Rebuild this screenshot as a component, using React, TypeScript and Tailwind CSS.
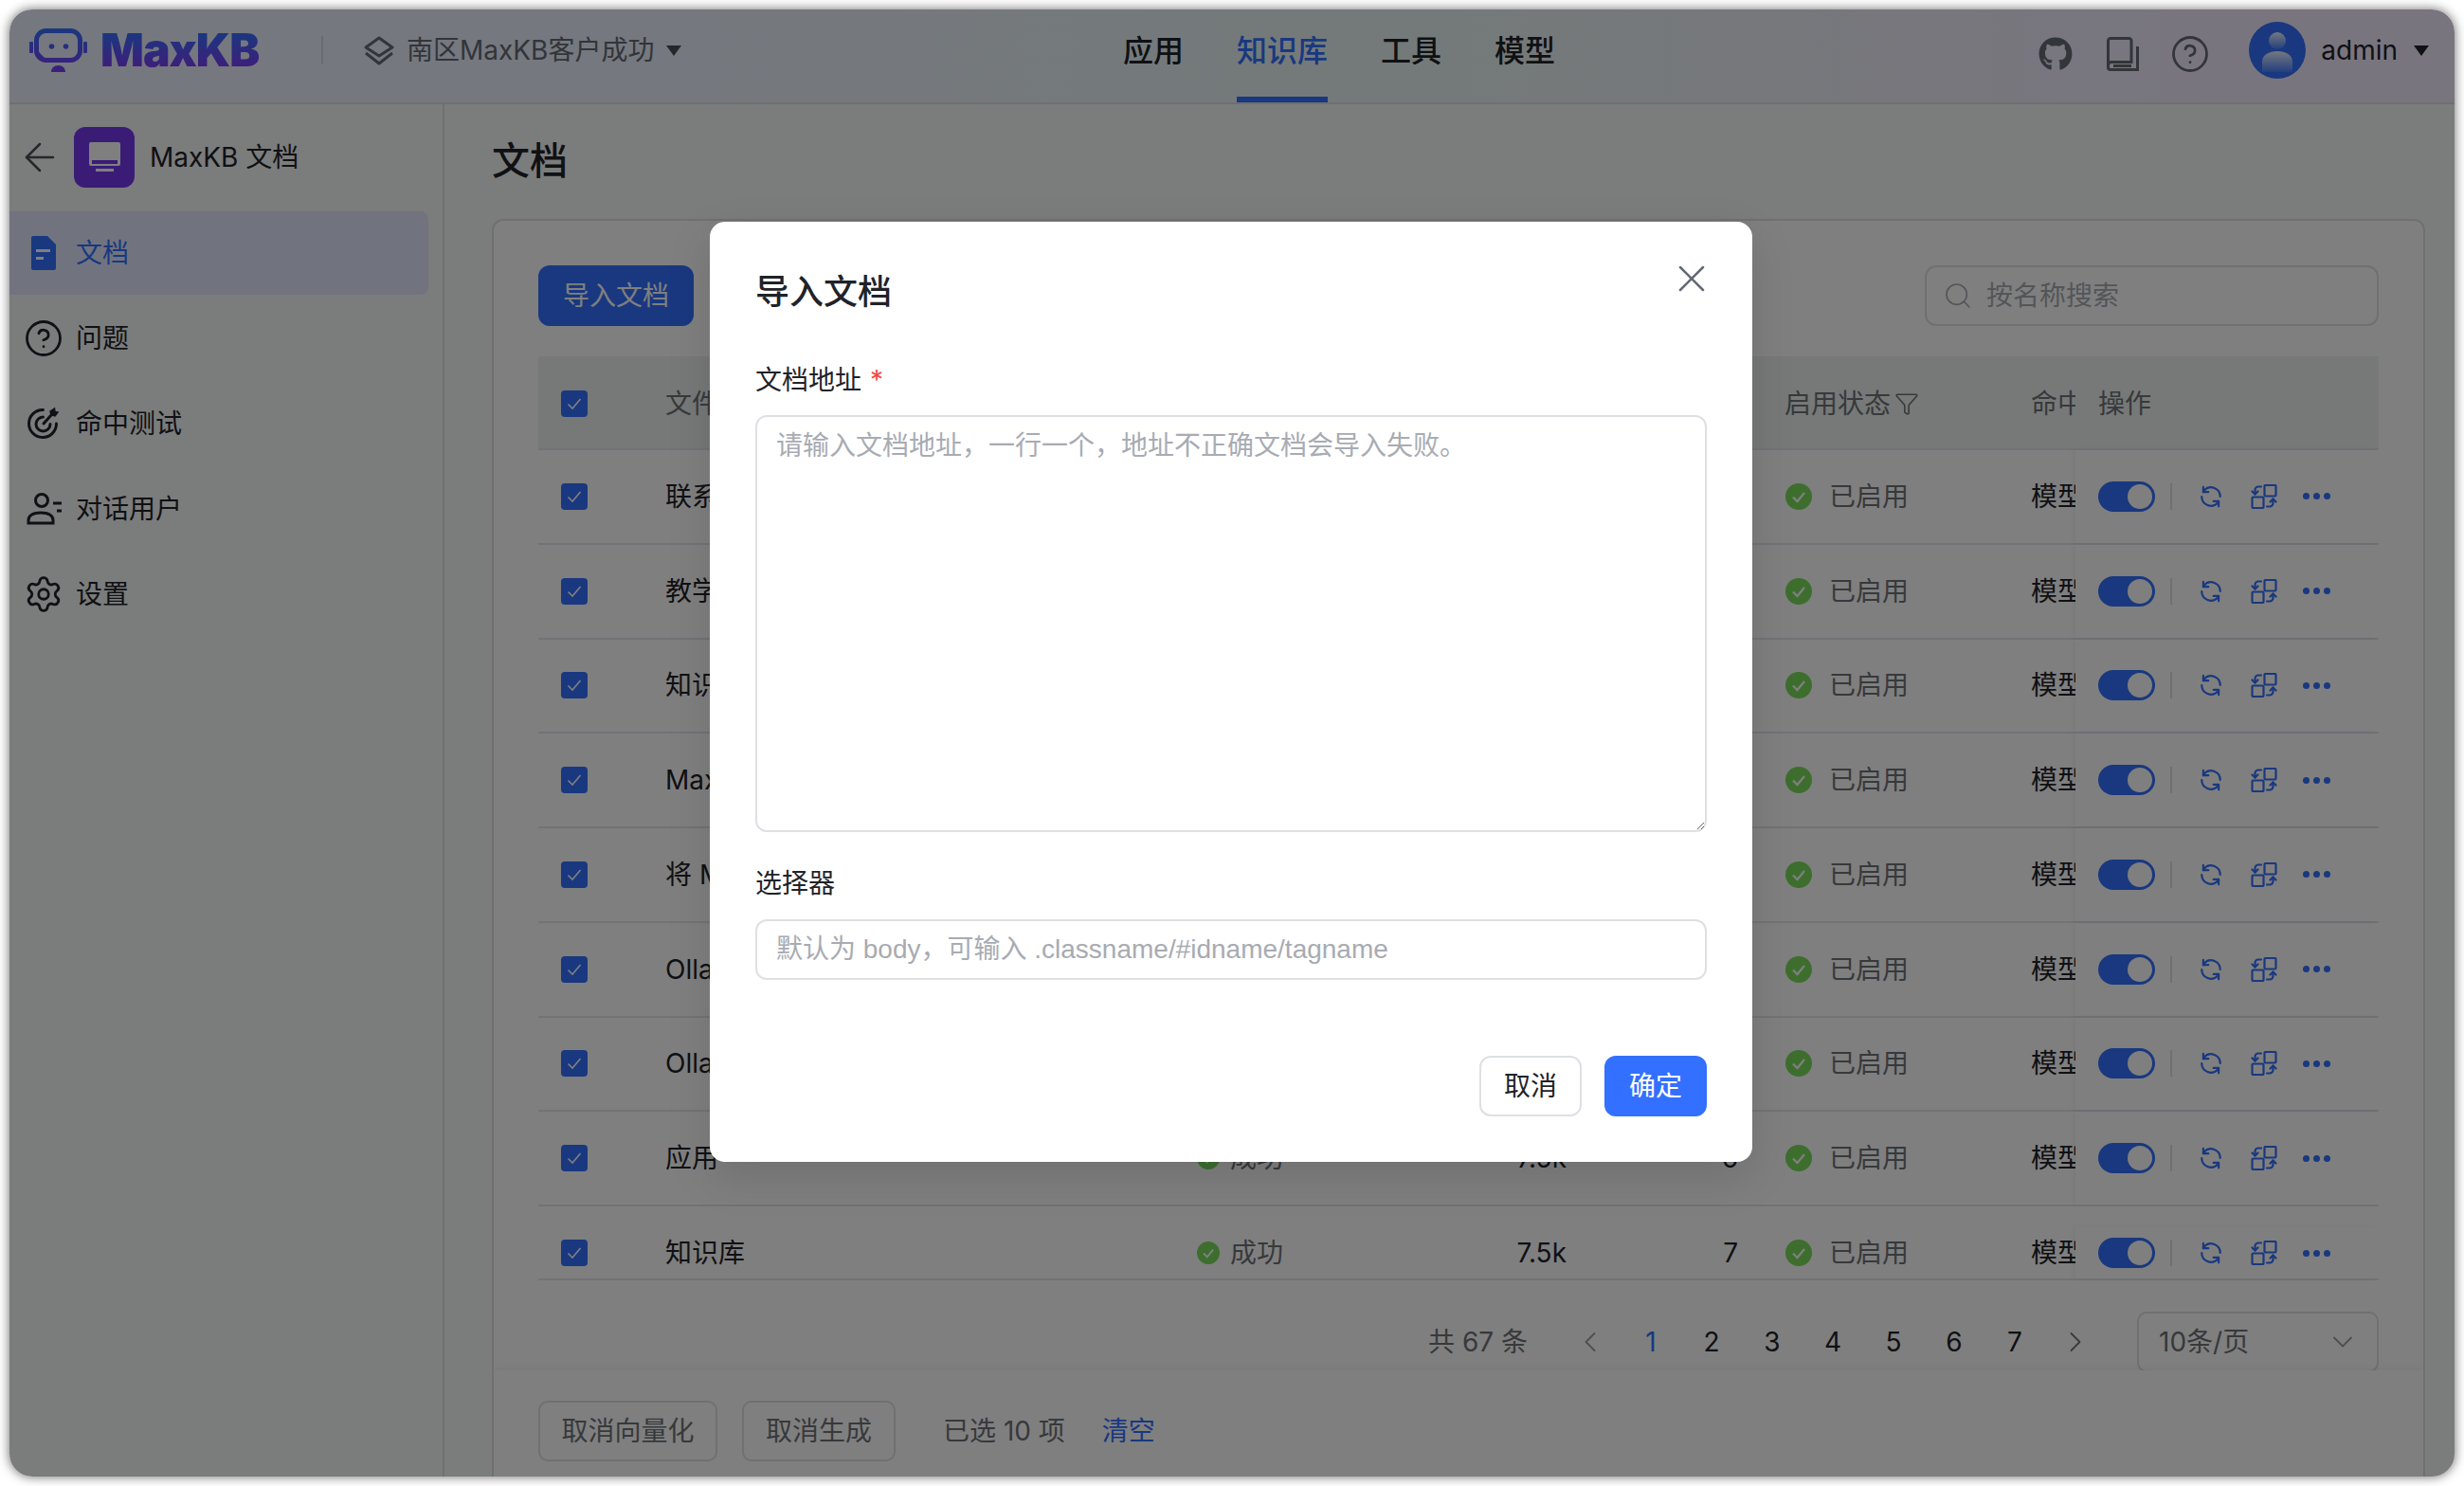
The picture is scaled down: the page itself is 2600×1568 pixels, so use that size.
import { useId } from 'react';
import { ChevronDown, ChevronLeft, ChevronRight, CircleHelp, ArrowLeft, Funnel, Search, Settings, X } from 'lucide-react';
import { FaGithub } from 'react-icons/fa';

const rows = [
  { name: '联系我们', chars: '1.2k', paras: '3' },
  { name: '教学视频', chars: '2.4k', paras: '5' },
  { name: '知识库问答', chars: '3.1k', paras: '6' },
  { name: 'MaxKB 简介', chars: '4.8k', paras: '9' },
  { name: '将 MaxKB 嵌入', chars: '6.2k', paras: '4' },
  { name: 'Ollama 模型', chars: '5.5k', paras: '8' },
  { name: 'Ollama 部署', chars: '3.3k', paras: '5' },
  { name: '应用', chars: '7.5k', paras: '6' },
  { name: '知识库', chars: '7.5k', paras: '7' },
];

const Caret = ({ className }: { className?: string }) => (
  <svg width="16" height="11" viewBox="0 0 16 11" className={className}>
    <path d="M0 0h16L8 11z" fill="currentColor" />
  </svg>
);

const Logo = () => {
  const id = useId();
  return (
    <svg width="61" height="46" viewBox="0 0 61 46">
      <defs>
        <linearGradient id={id} gradientUnits="userSpaceOnUse" x1="0" y1="0" x2="0" y2="46">
          <stop offset="0" stopColor="#3370ff" />
          <stop offset="1" stopColor="#7f3bf5" />
        </linearGradient>
      </defs>
      <rect x="0" y="14" width="4" height="12" rx="1" fill={`url(#${id})`} />
      <rect x="57" y="14" width="4" height="12" rx="1" fill={`url(#${id})`} />
      <rect x="7.500" y="2.500" width="46" height="31" rx="10" fill="none" stroke={`url(#${id})`} strokeWidth="5" />
      <path d="M10 32v-7l7 7z" fill={`url(#${id})`} />
      <circle cx="23.500" cy="19" r="2.800" fill={`url(#${id})`} />
      <circle cx="38.500" cy="19" r="2.800" fill={`url(#${id})`} />
      <path d="M23 46c0-4 3-7 7.500-7s7.500 3 7.500 7z" fill={`url(#${id})`} />
    </svg>
  );
};

const Avatar = () => {
  const id = useId();
  return (
    <svg width="60" height="60" viewBox="0 0 60 60">
      <defs>
        <linearGradient id={id} x1="0" y1="0" x2="0" y2="1">
          <stop offset="0" stopColor="#ffffff" stopOpacity="0.9" />
          <stop offset="1" stopColor="#ffffff" stopOpacity="0.1" />
        </linearGradient>
      </defs>
      <circle cx="30" cy="30" r="30" fill="#3370ff" />
      <circle cx="30" cy="20" r="9" fill={`url(#${id})`} />
      <path d="M14 53V42c0-7 7-11 16-11s16 4 16 11v11z" fill={`url(#${id})`} />
    </svg>
  );
};

const DocIcon = () => (
  <svg width="26" height="36" viewBox="0 0 26 36">
    <path d="M2 0h15l9 9v25a2 2 0 0 1-2 2H2a2 2 0 0 1-2-2V2a2 2 0 0 1 2-2z" fill="#3370ff" />
    <rect x="5" y="14" width="15" height="3" fill="#ffffff" />
    <rect x="5" y="22" width="8" height="3" fill="#ffffff" />
  </svg>
);

const TargetIcon = () => (
  <svg width="36" height="36" viewBox="0 0 36 36" fill="none" stroke="#1f2329" strokeWidth="3" strokeLinecap="round">
    <path d="M31.500 18a14.500 14.500 0 1 1-14-14.500" />
    <path d="M25 18.500a7.500 7.500 0 1 1-7.500-7.500" />
    <path d="M18 18 26 9" />
    <path d="M25 5l1 4 4 1 3-4-3-.5L29.500 2z" fill="#1f2329" strokeWidth="1.500" />
  </svg>
);

const UserIcon = () => (
  <svg width="38" height="36" viewBox="0 0 38 36" fill="none" stroke="#1f2329" strokeWidth="3">
    <circle cx="16" cy="9" r="6.500" />
    <path d="M2 33v-3c0-5 5-8 13-8s13 3 13 8v3z" />
    <path d="M28 12h9M32 20h5" />
  </svg>
);

const BookIcon = () => (
  <svg width="34" height="36" viewBox="0 0 34 36" fill="none" stroke="#646a73" strokeWidth="3">
    <path d="M5 26.500h21V4a2.500 2.500 0 0 0-2.500-2.500H4A2.500 2.500 0 0 0 1.500 4v28a2.500 2.500 0 0 0 2.500 2.500h28.500V10" />
    <path d="M1.500 30a3.500 3.500 0 0 1 3.500-3.500M7 30.500h19" />
  </svg>
);

const LayersIcon = () => (
  <svg width="32" height="32" viewBox="0 0 32 32" fill="none" stroke="#646a73" strokeWidth="3" strokeLinejoin="round">
    <path d="M16 3l14 10-14 9L2 13z" />
    <path d="M2 19l14 11 14-11" />
  </svg>
);

const SyncIcon = () => (
  <svg width="26" height="26" viewBox="0 0 24 24" fill="none" stroke="#3370ff" strokeWidth="2" strokeLinecap="round" strokeLinejoin="round">
    <path d="M21 12a9 9 0 0 0-15.500-6.200L4.500 7.500" />
    <path d="M4.500 2.500v5h5" />
    <path d="M3 12a9 9 0 0 0 15.500 6.200l1-1.700" />
    <path d="M19.500 21.500v-5h-5" />
  </svg>
);

const SwapIcon = () => (
  <svg width="28" height="26" viewBox="0 0 28 26" fill="none" stroke="#3370ff" strokeWidth="2.200" strokeLinecap="round" strokeLinejoin="round">
    <rect x="14.500" y="1" width="12" height="11.500" rx="1" />
    <rect x="1.500" y="13.500" width="12" height="11.500" rx="1" />
    <path d="M11 2.500H8A3.500 3.500 0 0 0 4.500 6v4.500" />
    <path d="M1.500 7.500l3 3 3-3" />
    <path d="M17 23.500h3a3.500 3.500 0 0 0 3.500-3.500v-4.500" />
    <path d="M20.500 18.500l3-3 3 3" />
  </svg>
);

const Check = () => (
  <span className="flex h-[28px] w-[28px] items-center justify-center rounded-[4px] bg-[#3370ff]">
    <svg width="18" height="16" viewBox="0 0 18 16" fill="none" stroke="#ffffff" strokeWidth="1.600">
      <path d="M2.500 8.500 7 13l8.500-10" />
    </svg>
  </span>
);

const StatusDot = ({ size }: { size: number }) => (
  <svg width={size} height={size} viewBox="0 0 28 28" className="shrink-0">
    <circle cx="14" cy="14" r="14" fill="#7bdc5c" />
    <path d="M8 14.500l4.500 4.500L20 10" fill="none" stroke="#ffffff" strokeWidth="2.200" />
  </svg>
);

const Sidebar = () => (
  <aside className="flex w-[459px] shrink-0 flex-col border-r-2 border-[#dfe1e5] bg-[#f6f9f8]">
    <div className="mb-[25px] flex items-center pl-[18px] pt-[24px]">
      <ArrowLeft size={48} strokeWidth={1.25} className="-mx-[10px] text-[#4b4f57]" />
      <div className="ml-[22px] flex h-[64px] w-[64px] flex-col items-center rounded-[12px] bg-[#7438ef] pt-[16px]">
        <div className="flex h-[25px] w-[33px] flex-col justify-end rounded-[2px] bg-[#ffffff] px-[3px] pb-[2px]">
          <div className="h-[4px] bg-[#7438ef]" />
        </div>
        <div className="mt-[3px] h-[3px] w-[19px] bg-[#ffffff]" />
      </div>
      <span className="ml-[16px] text-[28px] text-[#1f2329]">MaxKB 文档</span>
    </div>
    <nav className="mr-[15px] flex flex-col gap-[2px] text-[28px] text-[#1f2329]">
      <div className="flex h-[88px] items-center gap-[16px] rounded-r-[8px] bg-[#e2e8ff] pl-[18px] text-[#3370ff]">
        <span className="flex w-[36px] justify-center"><DocIcon /></span>
        文档
      </div>
      <div className="flex h-[88px] items-center gap-[16px] pl-[18px]">
        <CircleHelp size={42} strokeWidth={1.6} className="-mx-[3px]" />
        问题
      </div>
      <div className="flex h-[88px] items-center gap-[16px] pl-[18px]">
        <TargetIcon />
        命中测试
      </div>
      <div className="flex h-[88px] items-center gap-[14px] pl-[18px]">
        <UserIcon />
        对话用户
      </div>
      <div className="flex h-[88px] items-center gap-[16px] pl-[18px]">
        <Settings size={42} strokeWidth={1.6} className="-mx-[3px]" />
        设置
      </div>
    </nav>
  </aside>
);

const Header = () => (
  <header className="flex h-[100px] shrink-0 items-center border-b-2 border-[#dcdee3] bg-[linear-gradient(90deg,#ebf1ff_24%,#e8f5f3_56%,#f2ebfe_90%)]">
    <div className="mb-[12px] flex w-[1175px] shrink-0 items-center pl-[21px]">
      <Logo />
      <span className="ml-[14px] w-[167px] bg-[linear-gradient(180deg,#3370ff_10%,#7f3bf5_90%)] bg-clip-text text-[48px] leading-[48px] font-black tracking-[-1px] text-transparent">
        MaxKB
      </span>
      <div className="ml-[66px] h-[30px] w-[2px] bg-[#d5d7dc]" />
      <span className="ml-[43px]"><LayersIcon /></span>
      <span className="ml-[13px] text-[28px] text-[#646a73]">南区MaxKB客户成功</span>
      <Caret className="ml-[13px] text-[#4b4f57]" />
    </div>
    <nav className="flex h-full items-stretch gap-14 text-[32px] font-medium text-[#1f2329]">
      <span className="flex items-center pb-[10px]">应用</span>
      <span className="flex items-center border-b-[6px] border-[#3370ff] pb-[4px] text-[#3370ff]">知识库</span>
      <span className="flex items-center pb-[10px]">工具</span>
      <span className="flex items-center pb-[10px]">模型</span>
    </nav>
    <div className="mb-[12px] ml-auto flex items-center pr-[27px]">
      <div className="mr-[44px] mt-[8px] flex items-center gap-[36px] text-[#646a73]">
        <FaGithub size={36} />
        <BookIcon />
        <CircleHelp size={42} strokeWidth={1.6} className="-mx-[3px]" />
      </div>
      <Avatar />
      <span className="ml-[16px] text-[28px] text-[#1f2329]">admin</span>
      <Caret className="ml-[17px] text-[#1f2329]" />
    </div>
  </header>
);

const Table = () => (
  <div className="text-[28px] text-[#1f2329]">
    <div className="flex h-[99px] items-stretch border-b-2 border-[#e4e5ee] bg-[#ecf2f0] pt-[2px] text-[#6f7277]">
      <div className="flex w-[134px] items-center pl-[24px]"><Check /></div>
      <div className="flex w-[561px] items-center">文件名称</div>
      <div className="flex w-[259px] items-center">文件状态</div>
      <div className="flex w-[131px] items-center justify-end">字符数</div>
      <div className="flex w-[181px] items-center justify-end">分段</div>
      <div className="flex w-[309px] items-center gap-[4px] pl-[49px]">启用状态 <Funnel size={26} strokeWidth={1.5} /></div>
      <div className="flex w-[47px] items-center overflow-hidden whitespace-nowrap">命中处理方式</div>
      <div className="flex w-[320px] items-center pl-[24px]">操作</div>
    </div>
    {rows.map((row, i) => (
      <div key={i} className={`flex items-stretch border-b-2 border-[#e4e5ee] ${i === 8 ? 'h-[78px] pt-[22px]' : 'h-[99.75px]'}`}>
        <div className="flex w-[134px] items-center pl-[24px]"><Check /></div>
        <div className="flex w-[561px] items-center">{row.name}</div>
        <div className="flex w-[259px] items-center gap-[11px] text-[#6f7277]"><StatusDot size={24} />成功</div>
        <div className="flex w-[131px] items-center justify-end">{row.chars}</div>
        <div className="flex w-[181px] items-center justify-end">{row.paras}</div>
        <div className="flex w-[309px] items-center gap-[18px] pl-[50px] text-[#6f7277]"><StatusDot size={28} />已启用</div>
        <div className="flex w-[47px] items-center overflow-hidden whitespace-nowrap">模型优化</div>
        <div className="flex w-[320px] items-center bg-white pl-[24px] shadow-[-3px_0_5px_rgba(0,0,0,0.05)]">
          <span className="flex h-[32px] w-[60px] items-center justify-end rounded-full bg-[#3370ff] pr-[3px]">
            <span className="h-[26px] w-[26px] rounded-full bg-white" />
          </span>
          <span className="ml-[16px] h-[28px] w-[2px] bg-[#dee0e3]" />
          <span className="ml-[28px]"><SyncIcon /></span>
          <span className="ml-[29px]"><SwapIcon /></span>
          <span className="ml-[27px] flex gap-[4px]">
            <span className="h-[7px] w-[7px] rounded-full bg-[#3370ff]" />
            <span className="h-[7px] w-[7px] rounded-full bg-[#3370ff]" />
            <span className="h-[7px] w-[7px] rounded-full bg-[#3370ff]" />
          </span>
        </div>
      </div>
    ))}
  </div>
);

const Pagination = () => (
  <div className="mt-[33px] flex h-[64px] items-center justify-end text-[28px] text-[#1f2329]">
    <span className="mr-[34px] text-[#6f7277]">共 67 条</span>
    <span className="flex w-[64px] justify-center text-[#9a9da3]"><ChevronLeft size={36} strokeWidth={1.2} /></span>
    {[1, 2, 3, 4, 5, 6, 7].map((n) => (
      <span key={n} className={`flex w-[64px] justify-center ${n === 1 ? 'text-[#3370ff]' : ''}`}>{n}</span>
    ))}
    <span className="flex w-[64px] justify-center text-[#6f7277]"><ChevronRight size={36} strokeWidth={1.2} /></span>
    <div className="ml-[33px] flex h-[64px] w-[255px] items-center justify-between rounded-[10px] border-2 border-[#dee0e3] pl-[21px] pr-[18px] text-[#6f7277]">
      10条/页
      <ChevronDown size={36} strokeWidth={1.2} className="text-[#9a9da3]" />
    </div>
  </div>
);

const ImportDialog = () => (
  <div className="absolute left-[739px] top-[224px] flex h-[992px] w-[1100px] flex-col rounded-[16px] bg-white px-[48px] pt-[50px] shadow-[0_16px_48px_rgba(0,0,0,0.12)]">
    <h2 className="text-[36px] leading-[48px] font-medium text-[#1f2329]">导入文档</h2>
    <X size={48} strokeWidth={1.25} className="absolute right-[40px] top-[36px] text-[#646a73]" />
    <label className="mt-[47px] mb-[15px] text-[28px] leading-[44px] text-[#1f2329]">
      文档地址<span className="ml-[9px] text-[#f54a45]">*</span>
    </label>
    <textarea
      className="h-[440px] w-full resize-y rounded-[12px] border-2 border-[#dee0e3] px-[20px] py-[10px] text-[28px] leading-[40px] outline-none placeholder:text-[#a8abb2]"
      placeholder="请输入文档地址，一行一个，地址不正确文档会导入失败。"
    />
    <label className="mt-[32px] mb-[16px] text-[28px] leading-[44px] text-[#1f2329]">选择器</label>
    <input
      className="h-[64px] w-full rounded-[12px] border-2 border-[#dee0e3] px-[20px] font-[family-name:'Liberation_Sans','Noto_Sans_CJK_SC',sans-serif] text-[28px] outline-none placeholder:text-[#a8abb2]"
      placeholder="默认为 body，可输入 .classname/#idname/tagname"
    />
    <div className="mt-[80px] flex justify-end gap-6 text-[28px]">
      <button className="h-[64px] w-[108px] rounded-[12px] border-2 border-[#dee0e3] text-[#1f2329]">取消</button>
      <button className="h-[64px] w-[108px] rounded-[12px] bg-[#3370ff] text-white">确定</button>
    </div>
  </div>
);

const App = () => {
  return (
    <div className="h-[1568px] w-[2600px] overflow-hidden bg-white p-[10px] font-[family-name:Inter,'Noto_Sans_CJK_SC',sans-serif]">
      <div className="relative flex h-[1548px] w-[2580px] flex-col overflow-hidden rounded-[24px] bg-[#f6f9f8] shadow-[0_0_12px_rgba(0,0,0,0.6)]">
        <Header />
        <div className="flex min-h-0 flex-1">
          <Sidebar />
          <main className="flex min-w-0 flex-1 flex-col pl-[50px] pr-[31px]">
            <h1 className="mt-[32px] mb-[33px] text-[40px] leading-[56px] font-medium text-[#1f2329]">文档</h1>
            <div className="flex min-h-0 flex-1 flex-col overflow-hidden rounded-t-[12px] border-x-2 border-t-2 border-[#e0e0e6] bg-white">
              <div className="min-h-0 flex-1 overflow-hidden px-[47px] pt-[47px]">
                <div className="mb-[32px] flex h-[64px] items-center justify-between">
                  <button className="h-[64px] w-[164px] rounded-[12px] bg-[#3370ff] text-[28px] text-white">导入文档</button>
                  <div className="flex h-[64px] w-[479px] items-center gap-[14px] rounded-[12px] border-2 border-[#dee0e3] pl-[17px] text-[28px] text-[#a8abb2]">
                    <Search size={32} strokeWidth={1.25} />
                    按名称搜索
                  </div>
                </div>
                <Table />
                <Pagination />
              </div>
              <div className="flex h-[112px] shrink-0 items-start bg-white pl-[47px] pt-[32px] text-[28px] shadow-[0_-3px_8px_rgba(0,0,0,0.05)]">
                <button className="h-[64px] w-[189px] rounded-[10px] border-2 border-[#dee0e3] text-[#6f7277]">取消向量化</button>
                <button className="ml-[26px] h-[64px] w-[162px] rounded-[10px] border-2 border-[#dee0e3] text-[#6f7277]">取消生成</button>
                <span className="ml-[50px] flex h-[64px] items-center text-[#6f7277]">已选 10 项</span>
                <span className="ml-[39px] flex h-[64px] items-center text-[#3370ff]">清空</span>
              </div>
            </div>
          </main>
        </div>
        <div className="absolute inset-0 bg-black/50" />
        <ImportDialog />
      </div>
    </div>
  );
};

export default App;
